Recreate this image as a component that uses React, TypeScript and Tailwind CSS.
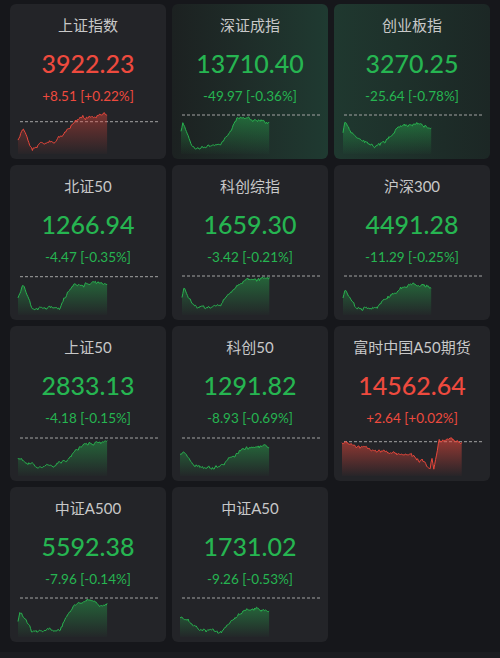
import { useId } from "react";

type Pt = [number, number];

interface IndexCard {
  name: string;
  price: string;
  change: string;
  up: boolean;
  seed: number;
  base: number;
  points: Pt[];
  glow?: "left" | "right";
}

const cards: IndexCard[] = [
  {
    name: "上证指数",
    price: "3922.23",
    change: "+8.51 [+0.22%]",
    up: true,
    seed: 11,
    base: 15.7,
    points: [[0, 34], [5, 22], [14, 44], [22, 37], [37, 37], [42, 32], [47, 26], [55, 17], [62, 11], [72, 12], [82, 10], [90, 8]],
  },
  {
    name: "深证成指",
    price: "13710.40",
    change: "-49.97 [-0.36%]",
    up: false,
    seed: 23,
    base: 9,
    glow: "right",
    points: [[1, 27], [3, 17], [13, 41], [40, 39], [45, 31], [52, 24], [57, 14], [67, 12], [80, 15], [90, 17]],
  },
  {
    name: "创业板指",
    price: "3270.25",
    change: "-25.64 [-0.78%]",
    up: false,
    seed: 37,
    base: 9,
    glow: "left",
    points: [[1, 26], [3, 17], [13, 31], [33, 41], [43, 37], [56, 24], [68, 19], [78, 17], [90, 22]],
  },
  {
    name: "北证50",
    price: "1266.94",
    change: "-4.47 [-0.35%]",
    up: false,
    seed: 41,
    base: 9.7,
    points: [[0, 30], [5, 16], [14, 43], [30, 40], [42, 40], [49, 26], [57, 17], [75, 17], [90, 17]],
  },
  {
    name: "科创综指",
    price: "1659.30",
    change: "-3.42 [-0.21%]",
    up: false,
    seed: 53,
    base: 9,
    points: [[2, 31], [4, 23], [15, 41], [40, 38], [50, 28], [60, 18], [70, 13], [90, 11]],
  },
  {
    name: "沪深300",
    price: "4491.28",
    change: "-11.29 [-0.25%]",
    up: false,
    seed: 67,
    base: 9,
    points: [[1, 30], [3, 22], [14, 41], [35, 39], [48, 30], [58, 22], [70, 18], [80, 17], [90, 19]],
  },
  {
    name: "上证50",
    price: "2833.13",
    change: "-4.18 [-0.15%]",
    up: false,
    seed: 71,
    base: 10,
    points: [[0, 30], [8, 33], [18, 40], [35, 38], [48, 32], [57, 22], [67, 16], [80, 14], [90, 12]],
  },
  {
    name: "科创50",
    price: "1291.82",
    change: "-8.93 [-0.69%]",
    up: false,
    seed: 83,
    base: 10,
    points: [[0, 26], [4, 24], [12, 36], [25, 41], [40, 38], [52, 30], [62, 22], [75, 19], [85, 17], [90, 20]],
  },
  {
    name: "富时中国A50期货",
    price: "14562.64",
    change: "+2.64 [+0.02%]",
    up: true,
    seed: 97,
    base: 13.7,
    points: [[0, 15], [8, 14], [18, 20], [38, 23], [58, 27], [73, 30], [83, 33], [88, 42], [90, 30], [92, 44], [94, 30], [97, 13], [103, 12], [118, 13], [120, 13]],
  },
  {
    name: "中证A500",
    price: "5592.38",
    change: "-7.96 [-0.14%]",
    up: false,
    seed: 101,
    base: 9,
    points: [[0, 33], [2, 23], [14, 44], [30, 41], [42, 41], [47, 31], [57, 16], [67, 11], [82, 16], [90, 14]],
  },
  {
    name: "中证A50",
    price: "1731.02",
    change: "-9.26 [-0.53%]",
    up: false,
    seed: 113,
    base: 9,
    points: [[0, 28], [8, 30], [20, 40], [40, 44], [50, 34], [60, 24], [70, 21], [80, 22], [90, 21]],
  },
];

// small seeded random so the sparklines stay the same every render
const rng = (seed: number) => {
  let s = seed >>> 0;
  return () => {
    s = (s + 0x6d2b79f5) >>> 0;
    let t = s;
    t = Math.imul(t ^ (t >>> 15), t | 1);
    t ^= t + Math.imul(t ^ (t >>> 7), t | 61);
    return ((t ^ (t >>> 14)) >>> 0) / 4294967296;
  };
};

const buildLine = (points: Pt[], seed: number) => {
  const rand = rng(seed);
  const out: Pt[] = [];
  const end = points[points.length - 1][0];
  let seg = 0;
  let drift = 0;
  for (let x = points[0][0]; x <= end; x += 0.9) {
    while (seg < points.length - 2 && x > points[seg + 1][0]) seg++;
    const [x0, y0] = points[seg];
    const [x1, y1] = points[seg + 1];
    const t = x1 === x0 ? 0 : (x - x0) / (x1 - x0);
    drift = drift * 0.8 + (rand() - 0.5) * 2.4;
    const y = y0 + (y1 - y0) * Math.min(1, Math.max(0, t)) + drift + (rand() - 0.5) * 1.6;
    out.push([x, Math.min(47, Math.max(1, y))]);
  }
  return out;
};

const Sparkline = ({ card }: { card: IndexCard }) => {
  const id = useId().replace(/:/g, "");
  const line = buildLine(card.points, card.seed);
  const ox = 8;
  const d = line.map(([x, y], i) => `${i ? "L" : "M"}${(x + ox).toFixed(1)},${y.toFixed(1)}`).join(" ");
  const first = line[0][0] + ox;
  const last = line[line.length - 1][0] + ox;
  const stroke = card.up ? "#e8473b" : "#28b24f";
  const strong = card.name.includes("期货");

  return (
    <svg width={156} height={48} viewBox="0 0 156 48" className="block">
      <defs>
        <linearGradient id={`g${id}`} x1="0" y1="0" x2="0" y2="1">
          <stop offset="0%" stopColor={stroke} stopOpacity={strong ? 0.6 : 0.45} />
          <stop offset="100%" stopColor={stroke} stopOpacity={0.02} />
        </linearGradient>
      </defs>
      <line x1={10} x2={148} y1={card.base} y2={card.base} stroke="#a3a3a3" strokeWidth={1} strokeDasharray="3 2" />
      <path d={`${d} L${last},48 L${first},48 Z`} fill={`url(#g${id})`} />
      <path d={d} fill="none" stroke={stroke} strokeWidth={1} strokeLinejoin="round" />
    </svg>
  );
};

const Card = ({ card }: { card: IndexCard }) => {
  const color = card.up ? "text-[#ee4a3e]" : "text-[#26b551]";
  const bg =
    card.glow === "right"
      ? "bg-gradient-to-r from-[#1c2121] to-[#1f3a31]"
      : card.glow === "left"
        ? "bg-gradient-to-r from-[#1f382f] to-[#1c2725]"
        : "bg-[#232428]";

  return (
    <div className={`flex h-[155px] w-[156px] flex-col items-center rounded-md pt-[11px] ${bg}`}>
      <h2 className="text-[15px] leading-[20px] text-[#c8c8c8]">{card.name}</h2>
      <p className={`mt-[13px] text-[25px] font-medium leading-[30px] ${color}`}>{card.price}</p>
      <p className={`mt-[9px] text-[13.5px] leading-[18px] ${color}`}>{card.change}</p>
      <div className="mt-[1px] self-stretch">
        <Sparkline card={card} />
      </div>
    </div>
  );
};

export default function App() {
  return (
    <div
      className="flex min-h-[658px] w-[500px] flex-col bg-[#16171b]"
      style={{ fontFamily: 'Lato, "Noto Sans CJK SC", sans-serif' }}
    >
      <div className="grid grid-cols-[repeat(3,156px)] gap-[6px] pl-[10px] pt-[4px]">
        {cards.map((c) => (
          <Card key={c.name} card={c} />
        ))}
      </div>
      <div className="flex-1" />
      <div className="h-[6px] bg-[#1b1c20]" />
    </div>
  );
}
